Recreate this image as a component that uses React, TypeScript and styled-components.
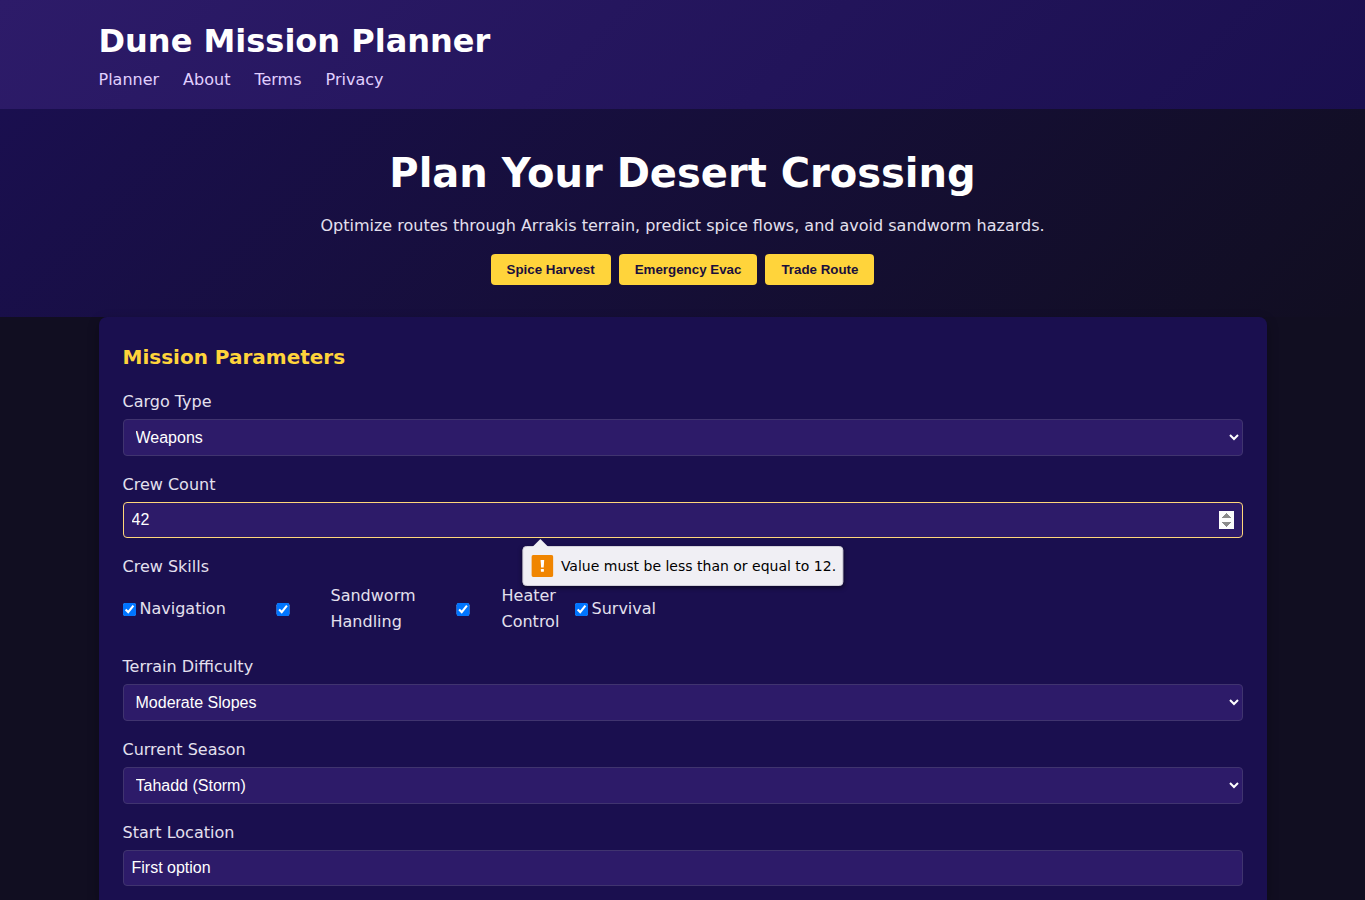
import React from "react";
import styled, { createGlobalStyle } from "styled-components";

const GlobalStyle = createGlobalStyle`
  *, *::before, *::after { box-sizing: border-box; }
  body {
    margin: 0;
    background: #110e21;
    color: #e4e0ee;
    font-family: "DejaVu Sans", sans-serif;
    font-size: 16px;
    line-height: 26px;
  }
`;

const Page = styled.div`
  min-height: 100vh;
  display: flex;
  flex-direction: column;
`;

const Container = styled.div`
  width: 100%;
  max-width: 1200px;
  margin: 0 auto;
  padding: 0 16px;
`;

const Header = styled.header`
  padding: 16px 0;
  background: linear-gradient(135deg, #2d1b69, #1a0f4f);
`;

const Brand = styled.h1`
  margin: 0;
  color: #ffffff;
  font-size: 32px;
  line-height: 51px;
`;

const Nav = styled.nav`
  display: flex;
  gap: 24px;
`;

const NavLink = styled.a`
  color: #e0d0ff;
  text-decoration: none;
`;

const Hero = styled.section`
  padding: 32px 16px;
  text-align: center;
  background: linear-gradient(135deg, #1a0f4f, #110e21);
`;

const HeroTitle = styled.h2`
  margin: 0 0 8px;
  color: #ffffff;
  font-size: 40px;
  line-height: 64px;
`;

const HeroText = styled.p`
  margin: 0 0 16px;
  line-height: 25px;
`;

const Presets = styled.div`
  display: flex;
  flex-wrap: wrap;
  justify-content: center;
  gap: 8px;
`;

const PresetButton = styled.button`
  padding: 8px 16px;
  border: 0;
  border-radius: 4px;
  background: #ffd43b;
  color: #1a0f3c;
  font-family: "Liberation Sans", Arial, sans-serif;
  font-weight: bold;
  cursor: pointer;
`;

const Main = styled(Container)`
  flex: 1;
  display: flex;
  flex-direction: column;
`;

const Card = styled.form`
  flex: 1;
  display: flex;
  flex-direction: column;
  gap: 16px;
  padding: 24px 24px 0;
  border-radius: 8px 8px 0 0;
  background: #1a0f4f;
  box-shadow: 0 4px 12px rgba(0, 0, 0, 0.3);
`;

const CardTitle = styled.h2`
  margin: 0;
  color: #ffd43b;
  font-size: 20px;
  line-height: 32px;
`;

const Field = styled.div`
  position: relative;
  display: flex;
  flex-direction: column;
  gap: 4px;
`;

const SkillGroup = styled.fieldset`
  min-width: 0;
  margin: 0;
  padding: 0;
  border: 0;
`;

const Legend = styled.legend`
  padding: 0;
`;

const controlStyle = `
  width: 100%;
  margin: 0;
  padding: 8px;
  border: 1px solid #40346f;
  border-radius: 4px;
  outline: none;
  background: #2d1b69;
  color: #ffffff;
  font-family: "Liberation Sans", Arial, sans-serif;
  font-size: 16px;
`;

const Select = styled.select`
  ${controlStyle}
`;

const Input = styled.input<{ $invalid?: boolean }>`
  ${controlStyle}
  ${(p) => p.$invalid && "border-color: #ffd77a;"}
  &::-webkit-inner-spin-button { opacity: 1; }
`;

const Skills = styled.div`
  display: flex;
  flex-wrap: wrap;
  gap: 12px;
  padding: 3px 0;
`;

const Skill = styled.label`
  display: flex;
  align-items: center;
  gap: 4px;
`;

const SkillBox = styled.input<{ $width: number }>`
  width: ${(p) => p.$width}px;
  height: 13px;
  margin: 0;
`;

const SkillName = styled.span<{ $width: number }>`
  width: ${(p) => p.$width}px;
`;

const Bubble = styled.div`
  position: absolute;
  top: calc(100% + 8px);
  left: 50%;
  z-index: 1;
  display: flex;
  align-items: center;
  gap: 8px;
  width: max-content;
  padding: 8px 6px 8px 8px;
  border: 1px solid #d2d0da;
  border-radius: 4px;
  background: #f0eff4;
  color: #000000;
  font-size: 14px;
  line-height: 22px;
  box-shadow: 0 2px 4px rgba(0, 0, 0, 0.5);
  transform: translateX(-50%);

  &::before {
    content: "";
    position: absolute;
    bottom: 100%;
    left: 9px;
    border: 8px solid transparent;
    border-top: 0;
    border-bottom-color: #f0eff4;
  }
`;

const skills = [
  { name: "Navigation", box: 13, text: 87 },
  { name: "Sandworm Handling", box: 88, text: 85 },
  { name: "Heater Control", box: 70, text: 61 },
  { name: "Survival", box: 13, text: 66 },
];

function WarningIcon() {
  return (
    <svg width="22" height="22" viewBox="0 0 22 22" aria-hidden="true">
      <rect width="22" height="22" rx="2" fill="#f08500" />
      <path d="M9.2 5h3.6l-.5 7.4H9.7z" fill="#fff" />
      <rect x="9.5" y="14" width="3" height="2.8" rx=".6" fill="#fff" />
    </svg>
  );
}

function SelectField({ id, label, options }: { id: string; label: string; options: string[] }) {
  return (
    <Field>
      <label htmlFor={id}>{label}</label>
      <Select id={id} defaultValue={options[0]}>
        {options.map((o) => (
          <option key={o}>{o}</option>
        ))}
      </Select>
    </Field>
  );
}

export default function App() {
  return (
    <Page>
      <GlobalStyle />
      <Header>
        <Container>
          <Brand>Dune Mission Planner</Brand>
          <Nav>
            {["Planner", "About", "Terms", "Privacy"].map((item) => (
              <NavLink key={item} href={`#${item.toLowerCase()}`}>
                {item}
              </NavLink>
            ))}
          </Nav>
        </Container>
      </Header>
      <Hero>
        <HeroTitle>Plan Your Desert Crossing</HeroTitle>
        <HeroText>
          Optimize routes through Arrakis terrain, predict spice flows, and avoid sandworm hazards.
        </HeroText>
        <Presets>
          {["Spice Harvest", "Emergency Evac", "Trade Route"].map((preset) => (
            <PresetButton key={preset} type="button">
              {preset}
            </PresetButton>
          ))}
        </Presets>
      </Hero>
      <Main as="main">
        <Card noValidate>
          <CardTitle>Mission Parameters</CardTitle>
          <SelectField id="cargo" label="Cargo Type" options={["Weapons"]} />
          <Field>
            <label htmlFor="crew">Crew Count</label>
            <Input
              id="crew"
              type="number"
              max={12}
              defaultValue={42}
              $invalid
              aria-invalid="true"
              aria-describedby="crew-error"
            />
            <Bubble id="crew-error" role="alert">
              <WarningIcon />
              Value must be less than or equal to 12.
            </Bubble>
          </Field>
          <SkillGroup>
            <Legend>Crew Skills</Legend>
            <Skills>
              {skills.map((s) => (
                <Skill key={s.name}>
                  <SkillBox type="checkbox" defaultChecked $width={s.box} />
                  <SkillName $width={s.text}>{s.name}</SkillName>
                </Skill>
              ))}
            </Skills>
          </SkillGroup>
          <SelectField id="terrain" label="Terrain Difficulty" options={["Moderate Slopes"]} />
          <SelectField id="season" label="Current Season" options={["Tahadd (Storm)"]} />
          <Field>
            <label htmlFor="start">Start Location</label>
            <Input id="start" type="text" defaultValue="First option" />
          </Field>
        </Card>
      </Main>
    </Page>
  );
}
